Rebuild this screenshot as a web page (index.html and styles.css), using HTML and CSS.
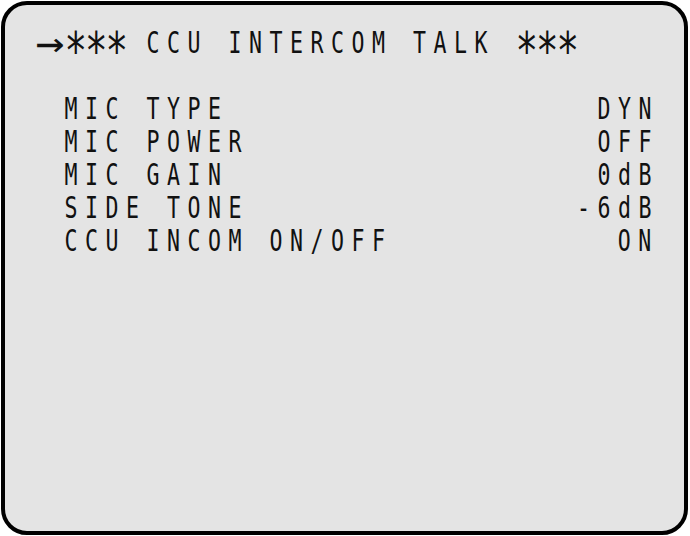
FILE: index.html
```html
<!DOCTYPE html>
<html lang="en">
<head>
    <meta charset="UTF-8">
    <meta name="viewport" content="width=device-width, initial-scale=1.0">
    <title>CCU INTERCOM TALK</title>
    <link rel="stylesheet" href="styles.css">
</head>
<body>

    <div class="monitor">
        <div class="screen">
            <div class="title"><span class="arrow">→</span><span class="stars">***</span> CCU INTERCOM TALK <span class="stars">***</span></div>

            <ul class="menu">
                <li><span>MIC TYPE</span><span>DYN</span></li>
                <li><span>MIC POWER</span><span>OFF</span></li>
                <li><span>MIC GAIN</span><span>0dB</span></li>
                <li><span>SIDE TONE</span><span>-6dB</span></li>
                <li><span>CCU INCOM ON/OFF</span><span>ON</span></li>
            </ul>
        </div>
    </div>

</body>
</html>
```

FILE: styles.css
```css
/* page */
body {
    margin: 0;
    background: #fff;
}

/* monitor frame */
.monitor {
    box-sizing: border-box;
    width: 687px;
    height: 534px;
    margin: 1px;
    padding: 21px 0 0 39px;
    border: 4px solid #000;
    border-radius: 26px;
    background: #e4e4e4;
    overflow: hidden;
}

/* osd text: 30 character cells, squeezed to the narrow on-screen font */
.screen {
    width: 854px;
    font-family: "DejaVu Sans Mono", monospace;
    font-size: 30px;
    line-height: 33px;
    letter-spacing: 10.41px;
    color: #111;
    transform: scaleX(0.72);
    transform-origin: 0 0;
}

.title {
    white-space: pre;
}

.arrow {
    display: inline-block;
    width: 28.47px;
    font-size: 42px;
    line-height: 0;
    letter-spacing: 0;
    vertical-align: -4px;
    transform: scaleX(1.59);
    transform-origin: 20.2px 50%;
}

.stars {
    font-size: 52px;
    letter-spacing: -2.83px;
    line-height: 0;
    vertical-align: -16px;
}

/* menu rows */
.menu {
    list-style: none;
    margin: 33px 0 0;
    padding: 0;
}

.menu li {
    display: flex;
    justify-content: space-between;
    padding-left: 28.47px;
    white-space: pre;
}
```
